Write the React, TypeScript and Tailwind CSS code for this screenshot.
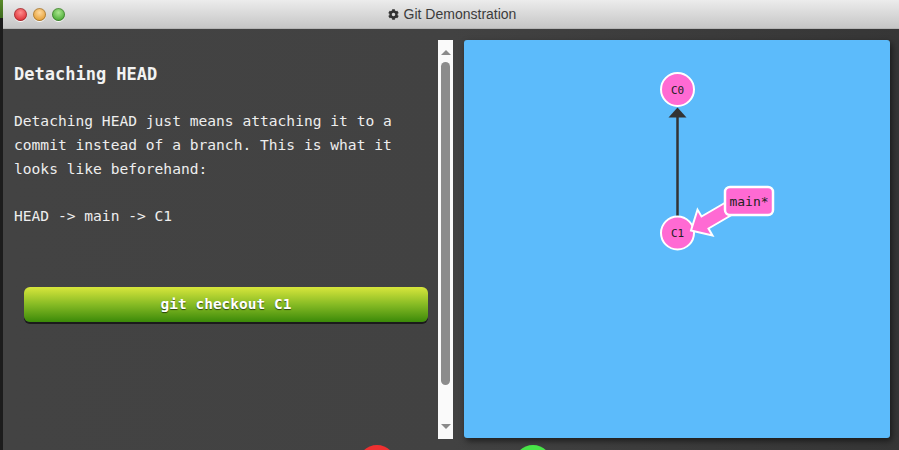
import { FaCog } from "react-icons/fa";

const mono = { fontFamily: '"DejaVu Sans Mono", "Liberation Mono", monospace' };

const TrafficLight = ({ color }: { color: string }) => (
  <div className="w-[13px] h-[13px] rounded-full shadow-[0_1px_0_rgba(255,255,255,0.9),inset_0_0_0_1px_rgba(0,0,0,0.25)]" style={{ background: color }} />
);

const TitleBar = () => (
  <div className="h-[29px] shrink-0 flex items-center relative bg-gradient-to-b from-[#ececec] to-[#c6c6c6] border-b border-[#b4b4b4]">
    <div className="flex items-center gap-[6px] pl-[11px]">
      <TrafficLight color="radial-gradient(circle at 50% 35%, #ff8c8c, #e0363c 70%)" />
      <TrafficLight color="radial-gradient(circle at 50% 35%, #ffd89a, #e6a23c 70%)" />
      <TrafficLight color="radial-gradient(circle at 50% 35%, #a8e58c, #4fae3a 70%)" />
    </div>
    <div className="flex-1 flex justify-center items-center gap-[5px] pr-[60px] text-[14px] text-[#3c3c3c]" style={{ fontFamily: '"Liberation Sans", Arial, sans-serif' }}>
      <FaCog size={11} className="text-[#333]" />
      <span>Git Demonstration</span>
    </div>
  </div>
);

const Scrollbar = () => (
  <div className="w-[15px] h-[399px] shrink-0 bg-[#fafafa] flex flex-col items-center">
    <div className="h-[22px] flex items-center justify-center pt-[2px]">
      <div className="w-0 h-0 border-l-[5px] border-r-[5px] border-b-[5px] border-l-transparent border-r-transparent border-b-[#8a8a8a]" />
    </div>
    <div className="w-[9px] h-[323px] rounded-[5px] bg-[#8c8c8c]" />
    <div className="flex-1" />
    <div className="h-[24px] flex items-center justify-center pb-[2px]">
      <div className="w-0 h-0 border-l-[5px] border-r-[5px] border-t-[5px] border-l-transparent border-r-transparent border-t-[#8a8a8a]" />
    </div>
  </div>
);

const pink = "#ff6ad3";

const Graph = () => (
  <svg width="426" height="398" viewBox="0 0 426 398" style={mono}>
    <line x1="213.5" y1="176" x2="213.5" y2="76" stroke="#333" strokeWidth="2.5" />
    <polygon points="204.5,77.5 222.5,77.5 213.5,67.5" fill="#333" />
    <circle cx="213.5" cy="49.5" r="16.5" fill={pink} stroke="#fff" strokeWidth="2" />
    <text x="213.5" y="53.5" textAnchor="middle" fontSize="11" fill="#222">C0</text>
    <circle cx="213.5" cy="193" r="16.5" fill={pink} stroke="#fff" strokeWidth="2" />
    <text x="213.5" y="197" textAnchor="middle" fontSize="11" fill="#222">C1</text>
    <polygon
      points="268.5,174.5 244.5,188.5 248.5,195.4 227,190.5 233.5,169.6 237.5,176.5 261.5,162.5"
      fill={pink}
      stroke="#fff"
      strokeWidth="2"
      strokeLinejoin="miter"
    />
    <rect x="261" y="147" width="48" height="28" rx="5" fill={pink} stroke="#fff" strokeWidth="2.5" />
    <text x="285" y="165.5" textAnchor="middle" fontSize="13" fill="#222">main*</text>
  </svg>
);

export default function App() {
  return (
    <div className="w-[899px] h-[450px] overflow-hidden flex bg-[#424242]">
      <div className="w-[3px] shrink-0 flex flex-col bg-[#1c1c1c]">
        <div className="h-[18px] bg-gradient-to-b from-[#5a8a2a] to-[#3e6a1e]" />
      </div>
      <div className="flex-1 flex flex-col min-w-0 h-[450px]">
        <TitleBar />
        <div className="flex flex-col flex-1 min-h-0 overflow-hidden bg-gradient-to-r from-[#434343] via-[#424242] to-[#363636]">
          <div className="flex shrink-0 pt-[11px]">
            <div className="w-[435px] h-[399px] shrink-0 text-[#eeeeee]" style={mono}>
              <div className="pl-[11px] pt-[22px]">
                <h1 className="text-[17px] font-bold leading-[24px] text-[#f2f2f2]">Detaching HEAD</h1>
                <p className="mt-[23px] text-[14.6px] leading-[24px] whitespace-nowrap">
                  Detaching HEAD just means attaching it to a
                  <br />
                  commit instead of a branch. This is what it
                  <br />
                  looks like beforehand:
                </p>
                <p className="mt-[23px] text-[14.6px] leading-[24px]">HEAD -&gt; main -&gt; C1</p>
              </div>
              <div className="ml-[21px] mr-[10px] mt-[59px] h-[35px] rounded-[6px] bg-gradient-to-b from-[#d8e63c] via-[#86bb24] to-[#3a8a08] shadow-[0_2px_0_#1a1a1a] flex items-center justify-center">
                <span className="text-[14.5px] font-bold text-white [text-shadow:0_1px_1px_rgba(0,0,0,0.6)]">git checkout C1</span>
              </div>
            </div>
            <Scrollbar />
            <div className="ml-[11px] w-[426px] h-[398px] shrink-0 rounded-[3px] bg-[#5cbbfb] shadow-[2px_3px_6px_rgba(0,0,0,0.55)] overflow-hidden">
              <Graph />
            </div>
          </div>
          <div className="flex shrink-0 mt-[6px] pl-[355px] gap-[118px]">
            <div className="w-[38px] h-[38px] shrink-0 rounded-full bg-[#f03030]" />
            <div className="w-[38px] h-[38px] shrink-0 rounded-full bg-[#48e448]" />
          </div>
        </div>
      </div>
    </div>
  );
}
